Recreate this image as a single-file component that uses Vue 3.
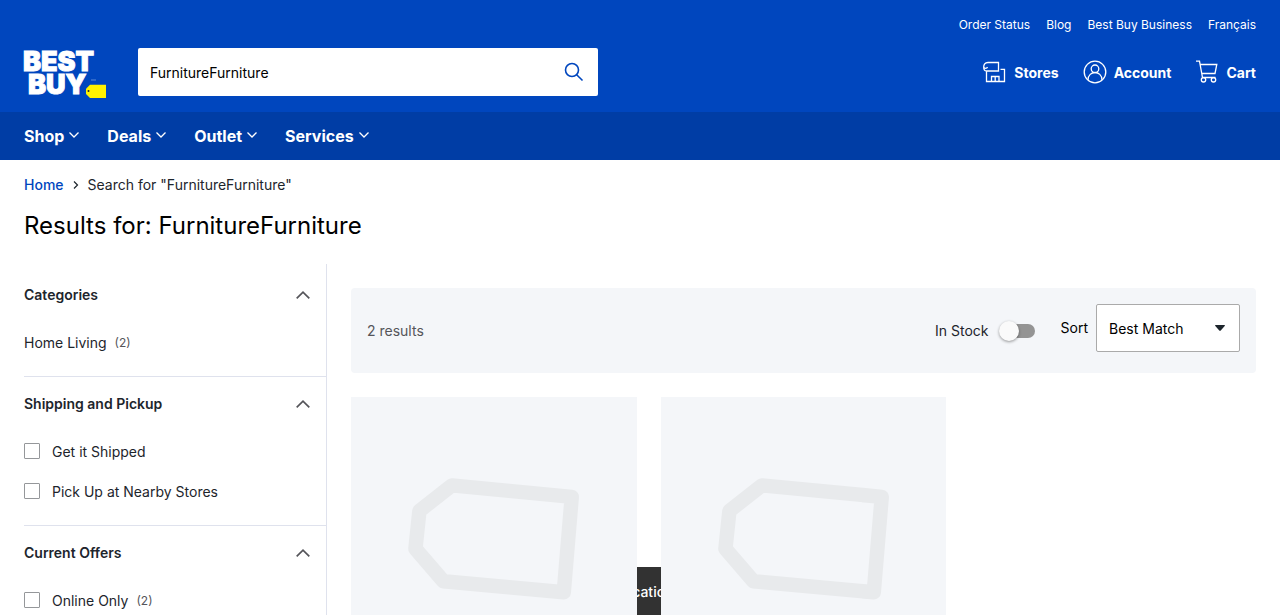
<script setup>
import { ref } from 'vue'

const query = ref('FurnitureFurniture')
const inStock = ref(false)
const sort = ref('Best Match')
const utilityLinks = ['Order Status', 'Blog', 'Best Buy Business', 'Français']
const menus = ['Shop', 'Deals', 'Outlet', 'Services']
const filters = [
  { title: 'Categories', links: [{ label: 'Home Living', count: 2 }] },
  { title: 'Shipping and Pickup', options: [{ label: 'Get it Shipped' }, { label: 'Pick Up at Nearby Stores' }] },
  { title: 'Current Offers', options: [{ label: 'Online Only', count: 2 }] },
]
</script>

<template>
  <div class="page">
    <header>
      <div class="top">
        <nav class="utility" aria-label="Utility">
          <a v-for="l in utilityLinks" :key="l" href="#">{{ l }}</a>
        </nav>
        <div class="bar">
          <a class="logo" href="#" aria-label="Best Buy">
            <svg width="82" height="48" viewBox="0 0 82 48" overflow="visible">
              <g class="word">
                <text x="-1" y="21">BEST</text>
                <text x="4" y="44">BUY</text>
              </g>
              <path d="M66 34.700H82V48H66L62 44V38.700Z" fill="#fff200" />
              <circle cx="64.500" cy="41" r="1" fill="#1d252c" />
              <path d="M67 30h5" stroke="#5d88d5" stroke-width="1" />
            </svg>
          </a>
          <form class="search" role="search" @submit.prevent>
            <input v-model="query" type="text" aria-label="Search Best Buy" />
            <button type="submit" aria-label="Search">
              <svg width="20" height="20" viewBox="0 0 20 20" fill="none" stroke="#0046be" stroke-width="1.600">
                <circle cx="8" cy="8" r="6.500" /><path d="M12.700 12.700L18.500 18.500" />
              </svg>
            </button>
          </form>
          <nav class="tools" aria-label="Account tools">
            <a href="#">
              <svg width="24" height="24" viewBox="0 0 24 24" fill="none" stroke="#fff" stroke-width="1.300">
                <path d="M5 2.500H15.500V11H3.500M5 2.500C1.800 2.500 0.700 4.500 0.700 7A2 2 0 0 0 4.500 7M0.700 7C0.700 9.500 2 11 3.500 11V21.500H21.500V9.300H17.500" />
                <path d="M8.500 21.500V16.500H16V21.500M12.200 16.500V21.500" />
              </svg>
              <span>Stores</span>
            </a>
            <a href="#">
              <svg width="24" height="24" viewBox="0 0 24 24" fill="none" stroke="#fff" stroke-width="1.300">
                <circle cx="12" cy="12" r="10.800" /><circle cx="12" cy="8.800" r="3.800" />
                <path d="M5 20C5 10 19 10 19 20" />
              </svg>
              <span>Account</span>
            </a>
            <a href="#">
              <svg width="24" height="24" viewBox="0 0 24 24" fill="none" stroke="#fff" stroke-width="1.300">
                <path d="M1 1.200H4.500L7.500 17.500H20.500M5.500 4.500H21.800L20 13.500H7" />
                <circle cx="8.500" cy="19.800" r="2.200" /><circle cx="18.500" cy="19.800" r="2.200" />
              </svg>
              <span>Cart</span>
            </a>
          </nav>
        </div>
      </div>
      <nav class="menu" aria-label="Main">
        <button v-for="m in menus" :key="m" type="button">
          {{ m }}
          <svg width="10" height="6" viewBox="0 0 10 6" fill="none" stroke="#fff" stroke-width="1.300"><path d="M0.500 0.500L5 5L9.500 0.500" /></svg>
        </button>
      </nav>
    </header>

    <main>
      <nav class="crumbs" aria-label="Breadcrumb">
        <a href="#">Home</a>
        <svg width="6" height="8" viewBox="0 0 6 8" fill="none" stroke="#1d252c" stroke-width="1.200"><path d="M1 0.500L4.500 4L1 7.500" /></svg>
        <span>Search for "{{ query }}"</span>
      </nav>
      <h1>Results for: {{ query }}</h1>

      <div class="columns">
        <aside>
          <section v-for="f in filters" :key="f.title">
            <h2>
              <button type="button" aria-expanded="true">
                {{ f.title }}
                <svg width="14" height="8" viewBox="0 0 14 8" fill="none" stroke="#55555a" stroke-width="1.700"><path d="M0.700 7.300L7 1.200L13.300 7.300" /></svg>
              </button>
            </h2>
            <ul>
              <li v-for="l in f.links" :key="l.label"><a href="#">{{ l.label }}</a><span class="count">({{ l.count }})</span></li>
              <li v-for="o in f.options" :key="o.label">
                <label><input type="checkbox" />{{ o.label }}</label>
                <span v-if="o.count" class="count">({{ o.count }})</span>
              </li>
            </ul>
          </section>
        </aside>

        <div class="results">
          <div class="controls">
            <p>2 results</p>
            <label class="stock">In Stock <input v-model="inStock" type="checkbox" role="switch" /></label>
            <div class="sort">
              <label for="sort">Sort</label>
              <div class="select">
                <select id="sort" v-model="sort">
                  <option>Best Match</option>
                  <option>Price Low-High</option>
                </select>
                <svg width="10" height="6" viewBox="0 0 10 6" fill="#1d252c"><path d="M0.500 0H9.500Q10.300 0 9.700 0.900L6 5.300Q5 6.300 4 5.300L0.300 0.900Q-0.300 0 0.500 0Z" /></svg>
              </div>
            </div>
          </div>
          <div class="grid">
            <div v-for="n in 2" :key="n" class="card">
              <svg viewBox="0 0 286 286" fill="none" stroke="#e8eaec" stroke-width="14.500" stroke-linejoin="round">
                <path d="M101 88.500L221 100L213 195.500L92.500 184.500L64.500 152L68.500 114Z" />
              </svg>
            </div>
          </div>
        </div>
      </div>
    </main>
    <div class="toast" role="status">Set location</div>
  </div>
</template>

<style>
body {
  background: #fff;
}
</style>

<style scoped>
.page {
  box-sizing: border-box;
  height: 100vh;
  overflow: hidden;
  font: 14px/20px Inter, "Liberation Sans", sans-serif;
  color: #1d252c;
}
.page * {
  box-sizing: border-box;
}
a {
  color: inherit;
  text-decoration: none;
}
button, input, select {
  font: inherit;
  color: inherit;
  border: 0;
  padding: 0;
  margin: 0;
  background: none;
}
svg {
  display: block;
  flex: none;
}
header {
  color: #fff;
}
.top {
  background: #0046be;
  padding: 17px 24px 16px;
}
.utility {
  display: flex;
  justify-content: flex-end;
  gap: 16px;
  font-size: 12px;
  line-height: 16px;
}
.bar {
  display: flex;
  align-items: center;
  height: 48px;
  margin-top: 15px;
}
.logo {
  margin: 4px 32px 0 0;
}
.word {
  font: 900 27px Inter, sans-serif;
  fill: #fff;
  stroke: #fff;
  stroke-width: 1px;
}
.search {
  display: flex;
  flex: 0 1 460px;
  height: 48px;
  background: #fff;
  border-radius: 2px;
}
.search input {
  flex: 1;
  min-width: 0;
  padding: 2px 12px 0;
  color: #000;
  outline: 0;
}
.search button {
  display: grid;
  place-items: center;
  width: 48px;
}
.tools {
  display: flex;
  gap: 24px;
  margin-left: auto;
  font-weight: 700;
}
.tools a {
  display: flex;
  align-items: center;
  gap: 7px;
}
.tools span {
  padding-top: 2px;
}
.menu {
  display: flex;
  align-items: center;
  gap: 28px;
  height: 48px;
  padding: 0 24px;
  background: #003da5;
}
.menu button {
  display: flex;
  align-items: center;
  gap: 5px;
  font-size: 16px;
  font-weight: 700;
}
.menu svg {
  margin-bottom: 2px;
}
main {
  padding: 0 24px;
}
.crumbs {
  display: flex;
  align-items: center;
  gap: 9px;
  padding-top: 15px;
}
.crumbs a {
  color: #0046be;
  font-weight: 500;
}
h1 {
  margin: 15px 0 22px;
  font-size: 24px;
  line-height: 32px;
  font-weight: 400;
  color: #000;
}
.columns {
  display: grid;
  grid-template-columns: 303px 1fr;
  gap: 24px;
}
aside {
  border-right: 1px solid #dfe2ed;
}
section {
  height: 149px;
  border-bottom: 1px solid #dfe2ed;
}
section:first-child {
  height: 113px;
}
h2 {
  margin: 0;
  font-size: 14px;
  font-weight: 600;
}
h2 button {
  display: flex;
  align-items: center;
  justify-content: space-between;
  width: 100%;
  padding: 17px 16px 18px 0;
}
section:first-child h2 button {
  padding-top: 21px;
}
ul {
  list-style: none;
  margin: 0;
  padding: 0;
}
li {
  display: flex;
  align-items: center;
  padding: 10px 0;
}
li label {
  display: flex;
  align-items: center;
  gap: 12px;
}
li input {
  appearance: none;
  width: 16px;
  height: 16px;
  margin-bottom: 2px;
  border: 1px solid #95979a;
  border-radius: 1px;
  background: #fff;
}
.count {
  margin-left: 8px;
  font-size: 12px;
  color: #55555a;
}
.results {
  padding-top: 24px;
}
.controls {
  display: flex;
  align-items: center;
  height: 85px;
  padding: 0 16px;
  background: #f4f6f9;
  border-radius: 4px;
}
.controls p {
  margin: 0 auto 0 0;
  color: #55555a;
}
.stock {
  display: flex;
  align-items: center;
  gap: 12px;
  margin-right: 26px;
}
.stock input {
  position: relative;
  appearance: none;
  width: 34px;
  height: 14px;
  border-radius: 7px;
  background: #949494;
}
.stock input::before {
  content: "";
  position: absolute;
  top: -3px;
  left: -2px;
  width: 20px;
  height: 20px;
  border-radius: 50%;
  background: #fafafa;
  box-shadow: 0 1px 3px rgba(0, 0, 0, 0.4);
}
.stock input:checked::before {
  left: 17px;
}
.sort {
  display: flex;
  align-items: center;
  gap: 8px;
  margin-bottom: 5px;
  color: #000;
}
.select {
  display: grid;
  align-items: center;
  width: 144px;
}
.select > * {
  grid-area: 1 / 1;
}
.select svg {
  justify-self: end;
  margin-right: 15px;
  pointer-events: none;
}
select {
  appearance: none;
  width: 100%;
  height: 48px;
  padding: 2px 12px 0;
  border: 1px solid #aaa;
  border-radius: 2px;
  background: #fff;
}
.grid {
  display: grid;
  grid-template-columns: repeat(3, 1fr);
  gap: 24px;
  margin-top: 24px;
}
.card {
  position: relative;
  z-index: 2;
  aspect-ratio: 1;
  background: #f4f6f9;
}
.toast {
  position: fixed;
  z-index: 1;
  bottom: 0;
  left: 50%;
  width: 288px;
  transform: translateX(-50%);
  padding: 15px 36px 13px 24px;
  background: #323232;
  color: #fff;
  font-weight: 500;
  text-align: center;
}
</style>
